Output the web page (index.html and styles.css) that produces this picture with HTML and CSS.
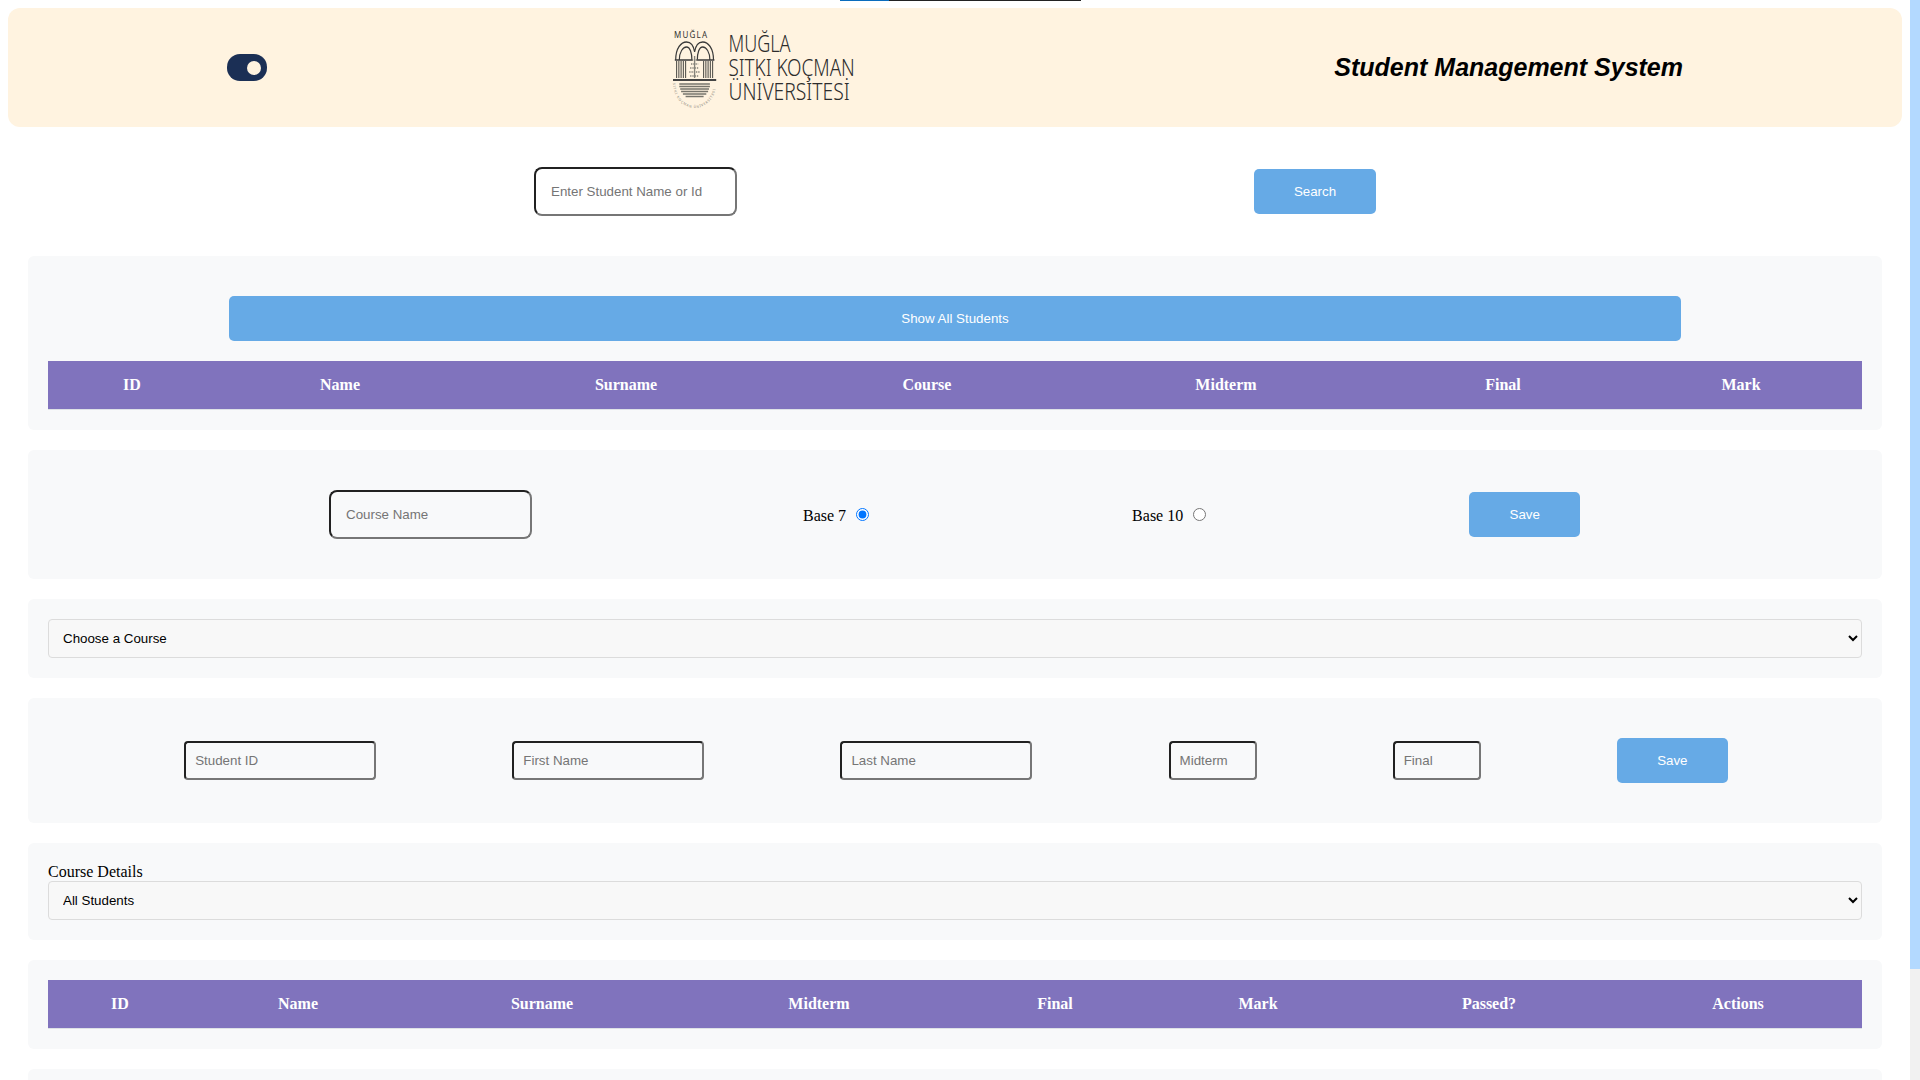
FILE: index.html
```html
<!DOCTYPE html>
<html lang="en">
<head>
<meta charset="utf-8">
<title>Student Management System</title>
<link rel="stylesheet" href="styles.css">
</head>
<body>
<div class="topline"><span class="topline-blue"></span><span class="topline-dark"></span></div>
<div class="scrollbar"><div class="scrollbar-thumb"></div></div>
<header class="app-header">
  <span class="toggle"><span class="toggle-knob"></span></span>
  <svg class="logo" width="190" height="84" viewBox="0 0 190 84" role="img" aria-label="Muğla Sıtkı Koçman Üniversitesi">
    <text class="logo-small" x="6" y="12" textLength="33" lengthAdjust="spacing">MUĞLA</text>
    <g transform="translate(2.300 0) scale(.9 1)">
      <g class="logo-arch">
        <path d="M6 34C6 22 12 16 18 16C23 16 26 20 27 26C28 20 31 16 36 16C42 16 48 22 48 34"/>
        <path d="M10 34C10 26 14 21 18 21C22 21 24 27 24 34"/>
        <path d="M30 34C30 27 32 21 36 21C40 21 44 26 44 34"/>
        <path d="M5 34H25M29 34H49"/>
      </g>
      <g class="logo-cols">
        <path d="M7 35V52M9.500 35V52M12 35V52M14.500 35V52M17 35V52"/>
        <path d="M37 35V52M39.500 35V52M42 35V52M44.500 35V52M47 35V52"/>
      </g>
      <g class="logo-tree">
        <path d="M27 30V52"/>
        <path d="M24 34H30M23 38H31M22 42H32M21 46H33M22 50H32" stroke-dasharray="1.500 1"/>
      </g>
      <path class="logo-base" d="M3 54H51"/>
      <g class="logo-stripes">
        <path d="M10 58H44M10 60.500H44M11 63H43M12 65.500H42M14 68H40M17 70.500H37"/>
      </g>
      <path id="logo-ring" class="logo-ringpath" d="M3 57A24 25 0 0 0 51 57"/>
      <text class="logo-ring"><textPath href="#logo-ring" textLength="70">SITKI KOÇMAN ÜNİVERSİTESİ</textPath></text>
    </g>
    <g transform="translate(60.500 0) scale(.73 1)">
      <text class="logo-word" x="0" y="26" textLength="85" lengthAdjust="spacingAndGlyphs">MUĞLA</text>
      <text class="logo-word" x="0" y="50" textLength="173" lengthAdjust="spacingAndGlyphs">SITKI KOÇMAN</text>
      <text class="logo-word" x="0" y="74" textLength="166" lengthAdjust="spacingAndGlyphs">ÜNİVERSİTESİ</text>
    </g>
  </svg>
  <h1 class="app-title">Student Management System</h1>
</header>

<div class="search-row">
  <input class="field field-large" type="text" placeholder="Enter Student Name or Id">
  <button class="btn btn-search" type="button">Search</button>
</div>

<main class="sections">
  <section class="panel panel-all">
    <button class="btn btn-wide" type="button">Show All Students</button>
    <table class="data-table">
      <colgroup><col class="a1"><col class="a2"><col class="a3"><col class="a4"><col class="a5"><col class="a6"><col class="a7"></colgroup>
      <thead><tr><th>ID</th><th>Name</th><th>Surname</th><th>Course</th><th>Midterm</th><th>Final</th><th>Mark</th></tr></thead>
    </table>
  </section>

  <section class="panel panel-course">
    <input class="field field-large field-course" type="text" placeholder="Course Name">
    <label class="base-option">Base 7 <input class="base-radio" type="radio" name="base" checked></label>
    <label class="base-option">Base 10 <input class="base-radio" type="radio" name="base"></label>
    <button class="btn btn-save" type="button">Save</button>
  </section>

  <section class="panel panel-choose">
    <select class="picker"><option>Choose a Course</option></select>
  </section>

  <section class="panel panel-student">
    <input class="field field-name" type="text" placeholder="Student ID">
    <input class="field field-name" type="text" placeholder="First Name">
    <input class="field field-name" type="text" placeholder="Last Name">
    <input class="field field-score" type="text" placeholder="Midterm">
    <input class="field field-score" type="text" placeholder="Final">
    <button class="btn btn-save" type="button">Save</button>
  </section>

  <section class="panel panel-details">
    <label class="details-label" for="details">Course Details</label>
    <select class="picker" id="details"><option>All Students</option></select>
  </section>

  <section class="panel panel-table">
    <table class="data-table">
      <colgroup><col class="b1"><col class="b2"><col class="b3"><col class="b4"><col class="b5"><col class="b6"><col class="b7"><col class="b8"></colgroup>
      <thead><tr><th>ID</th><th>Name</th><th>Surname</th><th>Midterm</th><th>Final</th><th>Mark</th><th>Passed?</th><th>Actions</th></tr></thead>
    </table>
  </section>

  <section class="panel panel-empty"></section>
</main>
</body>
</html>
```
FILE: styles.css
```css
html { background: #fff; overflow: hidden; }

body {
  margin: 8px 18px 8px 8px;
  font-family: "Liberation Serif", serif;
  font-size: 16px;
  color: #000;
}

.topline { position: absolute; top: 0; left: 840px; display: flex; height: 1px; }
.topline-blue { width: 49px; background: #0a6cbd; }
.topline-dark { width: 192px; background: #222; }

.scrollbar { position: fixed; top: 0; right: 0; width: 10px; height: 100vh; background: #f1f1f1; }
.scrollbar-thumb { height: 969px; background: #b3d9ff; }

.app-header {
  display: flex;
  align-items: center;
  justify-content: space-between;
  height: 119px;
  padding: 0 219px;
  background: #fff3e0;
  border-radius: 12px;
}
.toggle {
  display: flex;
  align-items: center;
  justify-content: flex-end;
  width: 40px;
  height: 27px;
  padding-right: 6px;
  box-sizing: border-box;
  background: #1b2f55;
  border-radius: 13px;
}
.toggle-knob { width: 14px; height: 14px; border-radius: 50%; background: #fff3e0; }

.logo { display: block; margin-right: 76px; }
.logo text { font-family: "Noto Sans", "Liberation Sans", sans-serif; }
.logo .logo-word { font-size: 24px; font-weight: 300; fill: #2c2c2c; }
.logo .logo-small { font-size: 8px; fill: #333; }
.logo .logo-ring { font-size: 3.5px; fill: #7d7a70; }
.logo-ringpath { fill: none; }
.logo-arch { fill: none; stroke: #3a3a3a; stroke-width: 1.300; }
.logo-cols { fill: none; stroke: #55534d; stroke-width: 1.200; }
.logo-tree { fill: none; stroke: #85827a; stroke-width: 1.500; }
.logo-base { fill: none; stroke: #444; stroke-width: 2; }
.logo-stripes { fill: none; stroke: #77756c; stroke-width: 1.400; }

.app-title {
  margin: 0;
  font-family: "Liberation Sans", sans-serif;
  font-size: 25px;
  font-style: italic;
  font-weight: 700;
}

.search-row {
  display: flex;
  align-items: center;
  gap: 517px;
  padding: 40px 0 40px 526px;
}

.field {
  box-sizing: border-box;
  height: 39px;
  padding: 0 9px;
  border: 2px inset #767676;
  border-radius: 4px;
  background: transparent;
  font-family: "Liberation Sans", sans-serif;
  font-size: 13.333px;
}
.field-large { width: 203px; height: 49px; padding: 0 15px; border-radius: 8px; }
.field-course { margin-right: 11px; }
.field-name { width: 192px; }
.field-score { width: 88px; }

.btn {
  height: 45px;
  padding: 0;
  border: 0;
  border-radius: 5px;
  background: #66aae6;
  color: #fff;
  font-family: "Liberation Sans", sans-serif;
  font-size: 13.333px;
}
.btn-search { width: 122px; }
.btn-save { width: 111px; }
.btn-wide { display: block; width: 80%; margin: 0 auto 20px; }

.sections { display: flex; flex-direction: column; gap: 20px; padding: 0 20px; }

.panel {
  box-sizing: border-box;
  padding: 20px;
  background: #f8f9fa;
  border-radius: 6px;
}
.panel-all { padding-top: 40px; }
.panel-course {
  display: flex;
  align-items: center;
  gap: 260px;
  padding: 40px 20px 40px 301px;
}
.panel-student {
  display: flex;
  align-items: center;
  justify-content: space-evenly;
  padding: 40px 18px 40px 20px;
}
.panel-empty { height: 127px; }

.base-option { white-space: nowrap; }
.base-radio { margin-left: 6px; }

.picker {
  display: block;
  box-sizing: border-box;
  width: 100%;
  height: 39px;
  padding: 0 10px;
  border: 1px solid #dcdcdc;
  border-radius: 4px;
  background: #f8f8f8;
  color: #000;
  font-family: "Liberation Sans", sans-serif;
  font-size: 13.333px;
}
.details-label { display: block; }

.data-table {
  width: 100%;
  table-layout: fixed;
  border-collapse: collapse;
}
.data-table th {
  height: 48px;
  padding: 0;
  background: #8073bd;
  border-bottom: 1px solid #dee2e6;
  color: #fff;
  font-weight: 700;
  text-align: center;
}

.a1 { width: 168px; } .a2 { width: 248px; } .a3 { width: 324px; } .a4 { width: 278px; }
.a5 { width: 320px; } .a6 { width: 234px; } .a7 { width: 242px; }
.b1 { width: 144px; } .b2 { width: 212px; } .b3 { width: 276px; } .b4 { width: 278px; }
.b5 { width: 194px; } .b6 { width: 212px; } .b7 { width: 250px; } .b8 { width: 248px; }
```
